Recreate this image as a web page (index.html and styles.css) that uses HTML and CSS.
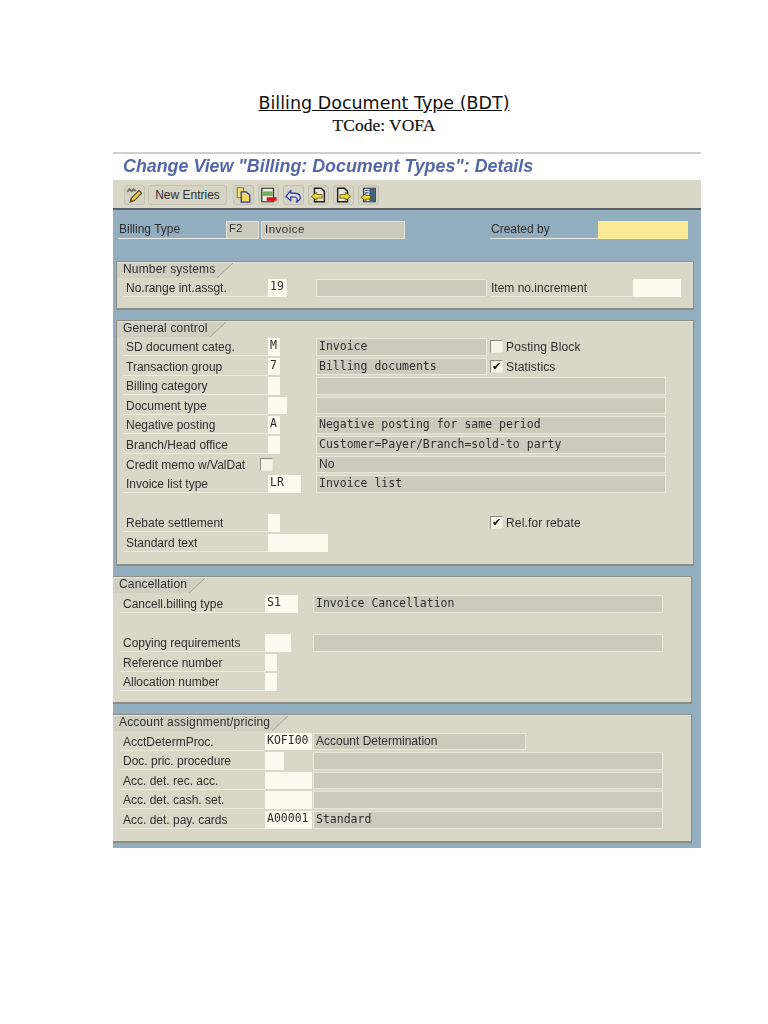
FILE: index.html
```html
<!DOCTYPE html>
<html lang="en">
<head>
<meta charset="utf-8">
<title>Billing Document Type (BDT)</title>
<link rel="stylesheet" href="styles.css">
</head>
<body>
<header class="heading">
  <h1 class="doc-title">Billing Document Type (BDT)</h1>
  <p class="doc-sub">TCode: VOFA</p>
</header>
<main class="screen">
  <h2 class="view-title">Change View "Billing: Document Types": Details</h2>
  <div class="toolbar">
    <button class="btn btn-icon" type="button"><svg viewBox="0 0 20 20" class="ico"><path d="M2 6.500 4.500 3.500 7 6 9 3.500 11.500 6" fill="none" stroke="#6e6e66" stroke-width="2"/><path d="M6.500 13.500 15 5 18 8 9.500 16.500 5 18Z" fill="#f2c94a" stroke="#4e4526" stroke-width="1.200"/><path d="M5 18 6.200 14.500 9 16.800Z" fill="#7a5a30"/></svg></button>
    <button class="btn btn-text" type="button">New Entries</button>
    <button class="btn btn-icon btn-copy" type="button"><svg viewBox="0 0 20 20" class="ico"><path d="M3 2H10V13H3Z" fill="#f4dc7a" stroke="#8a7a30" stroke-width="1.200"/><path d="M7.500 6.500H13L17 10V18H7.500Z" fill="#f3d95f" stroke="#2f35a0" stroke-width="1.400"/></svg></button>
    <button class="btn btn-icon" type="button"><svg viewBox="0 0 20 20" class="ico"><path d="M2.500 2.500H15.500V17.500H2.500Z" fill="#ecece0" stroke="#2c2c2c" stroke-width="1.300"/><path d="M3.500 6H14.500V11H3.500Z" fill="#6fae5a"/><path d="M8 12.500H19V16.500H8Z" fill="#d8121c"/></svg></button>
    <button class="btn btn-icon" type="button"><svg viewBox="0 0 20 20" class="ico"><path d="M1.500 11.500 7 5V8H11.500C16.500 8 18.500 11 17 15L13.500 18C15 14.500 14 12 10.500 12H7V16.500Z" fill="#dfe3f5" stroke="#3344a0" stroke-width="1.500" stroke-linejoin="round"/></svg></button>
    <button class="btn btn-icon" type="button"><svg viewBox="0 0 20 20" class="ico"><path d="M5.500 2.500H13L16.500 6V17.500H5.500Z" fill="#e8e8dc" stroke="#1c1c1c" stroke-width="1.600"/><path d="M2 11.500 8 7V9.500H14V13.500H8V16Z" fill="#f2d92e" stroke="#4c4208" stroke-width=".8"/></svg></button>
    <button class="btn btn-icon" type="button"><svg viewBox="0 0 20 20" class="ico"><path d="M3.500 2.500H11L14.500 6V17.500H3.500Z" fill="#e8e8dc" stroke="#1c1c1c" stroke-width="1.600"/><path d="M18 11.500 12 7V9.500H6V13.500H12V16Z" fill="#f2d92e" stroke="#4c4208" stroke-width=".8"/></svg></button>
    <button class="btn btn-icon" type="button"><svg viewBox="0 0 20 20" class="ico"><path d="M4.500 2.500H17.500V17.500H4.500Z" fill="#dfe2e4" stroke="#2c2c2c" stroke-width="1.300"/><path d="M11 3H17V17H11Z" fill="#3f607e"/><path d="M6 5H10M6 7.500H10" stroke="#3344a0" stroke-width="1.200"/><path d="M1.500 12.500 7 8.500V10.500H12V14.500H7V16.500Z" fill="#f2d92e" stroke="#4c4208" stroke-width=".8"/></svg></button>
  </div>
  <div class="canvas">
    <div class="head-row">
      <span class="head-label">Billing Type</span>
      <span class="head-code">F2</span>
      <span class="head-name">Invoice</span>
      <span class="head-label head-created">Created by</span>
      <span class="head-req"></span>
    </div>

    <section class="group group-first">
      <div class="tab"><span class="tab-text">Number systems</span><svg class="tab-cut" viewBox="0 0 16 17" preserveAspectRatio="none"><path d="M0 0H16L0 17Z" fill="#d0d0c2"/><path d="M16 0 0 17" stroke="#9a9c90" fill="none"/></svg></div>
      <div class="rows">
        <div class="row"><span class="lbl">No.range int.assgt.</span><span class="val"><span class="inp w-2">19</span></span><span class="cell"><span class="out out-s"></span><span class="lbl lbl-item">Item no.increment</span><span class="inp w-item"></span></span></div>
      </div>
    </section>

    <section class="group">
      <div class="tab"><span class="tab-text">General control</span><svg class="tab-cut" viewBox="0 0 16 17" preserveAspectRatio="none"><path d="M0 0H16L0 17Z" fill="#d0d0c2"/><path d="M16 0 0 17" stroke="#9a9c90" fill="none"/></svg></div>
      <div class="rows">
        <div class="row"><span class="lbl">SD document categ.</span><span class="val"><span class="inp w-1">M</span></span><span class="cell"><span class="out out-s mono">Invoice</span><span class="chk"></span><span class="chk-text">Posting Block</span></span></div>
        <div class="row"><span class="lbl">Transaction group</span><span class="val"><span class="inp w-1">7</span></span><span class="cell"><span class="out out-s mono">Billing documents</span><span class="chk chk-on">✔</span><span class="chk-text">Statistics</span></span></div>
        <div class="row"><span class="lbl">Billing category</span><span class="val"><span class="inp w-1"></span></span><span class="cell"><span class="out out-l"></span></span></div>
        <div class="row"><span class="lbl">Document type</span><span class="val"><span class="inp w-2"></span></span><span class="cell"><span class="out out-l"></span></span></div>
        <div class="row"><span class="lbl">Negative posting</span><span class="val"><span class="inp w-1">A</span></span><span class="cell"><span class="out out-l mono">Negative posting for same period</span></span></div>
        <div class="row"><span class="lbl">Branch/Head office</span><span class="val"><span class="inp w-1"></span></span><span class="cell"><span class="out out-l mono">Customer=Payer/Branch=sold-to party</span></span></div>
        <div class="row row-memo"><span class="lbl lbl-plain">Credit memo w/ValDat</span><span class="val"><span class="chk chk-memo"></span></span><span class="cell"><span class="out out-l">No</span></span></div>
        <div class="row"><span class="lbl">Invoice list type</span><span class="val"><span class="inp w-3">LR</span></span><span class="cell"><span class="out out-l mono">Invoice list</span></span></div>
        <div class="row"></div>
        <div class="row"><span class="lbl">Rebate settlement</span><span class="val"><span class="inp w-1"></span></span><span class="cell cell-far"><span class="chk chk-on">✔</span><span class="chk-text">Rel.for rebate</span></span></div>
        <div class="row"><span class="lbl">Standard text</span><span class="val"><span class="inp w-5"></span></span></div>
      </div>
    </section>

    <section class="group group-flush">
      <div class="tab"><span class="tab-text">Cancellation</span><svg class="tab-cut" viewBox="0 0 16 17" preserveAspectRatio="none"><path d="M0 0H16L0 17Z" fill="#d0d0c2"/><path d="M16 0 0 17" stroke="#9a9c90" fill="none"/></svg></div>
      <div class="rows">
        <div class="row"><span class="lbl">Cancell.billing type</span><span class="val"><span class="inp w-3">S1</span></span><span class="cell"><span class="out out-l mono">Invoice Cancellation</span></span></div>
        <div class="row"></div>
        <div class="row"><span class="lbl">Copying requirements</span><span class="val"><span class="inp w-2b"></span></span><span class="cell"><span class="out out-l"></span></span></div>
        <div class="row"><span class="lbl">Reference number</span><span class="val"><span class="inp w-1"></span></span></div>
        <div class="row"><span class="lbl">Allocation number</span><span class="val"><span class="inp w-1"></span></span></div>
      </div>
    </section>

    <section class="group group-flush group-last">
      <div class="tab"><span class="tab-text">Account assignment/pricing</span><svg class="tab-cut" viewBox="0 0 16 17" preserveAspectRatio="none"><path d="M0 0H16L0 17Z" fill="#d0d0c2"/><path d="M16 0 0 17" stroke="#9a9c90" fill="none"/></svg></div>
      <div class="rows">
        <div class="row"><span class="lbl">AcctDetermProc.</span><span class="val"><span class="inp w-6">KOFI00</span></span><span class="cell"><span class="out out-m">Account Determination</span></span></div>
        <div class="row"><span class="lbl">Doc. pric. procedure</span><span class="val"><span class="inp w-2"></span></span><span class="cell"><span class="out out-l"></span></span></div>
        <div class="row"><span class="lbl">Acc. det. rec. acc.</span><span class="val"><span class="inp w-6"></span></span><span class="cell"><span class="out out-l"></span></span></div>
        <div class="row"><span class="lbl">Acc. det. cash. set.</span><span class="val"><span class="inp w-6"></span></span><span class="cell"><span class="out out-l"></span></span></div>
        <div class="row"><span class="lbl">Acc. det. pay. cards</span><span class="val"><span class="inp w-6">A00001</span></span><span class="cell"><span class="out out-l mono">Standard</span></span></div>
      </div>
    </section>
  </div>
</main>
</body>
</html>
```
FILE: styles.css
```css
* { box-sizing: border-box; }
html, body { margin: 0; background: #fff; }
body { height: 1024px; overflow: hidden; }

.heading { padding-top: 92px; height: 152px; text-align: center; color: #111; }
.doc-title { margin: 0; font: 400 17.5px/22px "DejaVu Sans", sans-serif; text-decoration: underline; }
.doc-sub { margin: 0; font: 400 17.5px/22px "Liberation Serif", serif; -webkit-text-stroke: .2px #111; }

.screen { width: 588px; margin-left: 113px; border-top: 2px solid #cfcfcf; filter: blur(.35px); font: 12px/16px "Liberation Sans", sans-serif; color: #2e2e2e; }
.view-title { margin: 0; height: 26px; padding-left: 10px; font: italic 700 17.85px/25px "Liberation Sans", sans-serif; color: #5468a6; }

.toolbar { height: 30px; background: #d9d8c8; border-bottom: 2px solid #5c6066; display: flex; align-items: flex-start; padding: 5px 0 0 11px; gap: 4px; }
.btn { height: 20px; padding: 0; border: 1px solid #c4c3b3; border-radius: 3px; background: #d5d4c5; font: 12px/16px "Liberation Sans", sans-serif; color: #2e2e2e; display: flex; align-items: center; justify-content: center; }
.btn-icon { width: 21px; }
.btn-text { width: 79px; margin-left: -1px; }
.btn-copy { margin-left: 2px; }
.ico { width: 19px; height: 18px; display: block; }

.canvas { background: #93aebf; padding: 11px 0 5px; display: flex; flex-direction: column; gap: 10px; }

.head-row { display: flex; height: 18px; margin-left: 5px; margin-bottom: 12px; }
.head-label { width: 108px; border-bottom: 1px solid #e9ecea; padding-left: 1px; }
.head-code { width: 33px; background: #cbcbbd; border: 1px solid #e4e4d8; padding-left: 2px; font-size: 11.5px; line-height: 13px; }
.head-name { width: 144px; margin-left: 2px; background: #cbcbbd; border: 1px solid #e4e4d8; padding-left: 3px; line-height: 14px; font-size: 11.5px; letter-spacing: .5px; }
.head-created { margin-left: 85px; padding-left: 1px; }
.head-req { width: 90px; background: #fbe998; }

.group { margin: 0 7px 0 3px; background: #d9d8c8; border: 1px solid #8b8e84; border-width: 1px 1px 2px 1px; padding-bottom: 12.8px; }
.group-first { padding-bottom: 11.4px; }
.group-flush { margin: 0 9px 0 0; border-left-width: 0; padding-bottom: 11px; }
.group-last { padding-bottom: 12px; }

.tab { display: flex; height: 16px; margin-bottom: 1px; border-top: 1px solid #e6e6da; }
.group-flush .tab { margin-bottom: 1.700px; }
.tab-text { background: #d0d0c2; padding-left: 6px; padding-right: 2px; line-height: 12px; color: #2e2e2e; white-space: nowrap; letter-spacing: .17px; }
.tab-cut { width: 16px; height: 100%; display: block; }

.rows { display: grid; grid-auto-rows: 17.6px; row-gap: 2px; padding-left: 6px; }
.group-flush .rows { padding-left: 7px; }
.row { display: grid; grid-template-columns: 145px 48px 1fr; }
.row-memo { grid-template-columns: 137px 56px 1fr; }

.lbl { border-bottom: 1px solid #ecebdf; padding: 1px 0 0 3px; white-space: nowrap; line-height: 16px; }
.lbl-plain { border-bottom: 0; }
.val { display: flex; }
.cell { display: flex; align-items: flex-start; }
.cell-far { padding-left: 171px; }

.inp { display: block; flex: none; height: 17.6px; background: #fbfbef; padding-left: 2px; font: 11.500px/15px "DejaVu Sans Mono", monospace; color: #2e2e2e; }
.w-1 { width: 12px; }
.w-2 { width: 19px; }
.w-2b { width: 26px; }
.w-3 { width: 33px; }
.w-5 { width: 60px; }
.w-6 { width: 47px; }
.w-item { width: 48px; }

.out { display: block; height: 17.6px; background: #cbcbbd; border: 1px solid #e8e8dc; padding-left: 2px; line-height: 15px; white-space: nowrap; overflow: hidden; }
.out-s { width: 171px; }
.out-m { width: 213px; }
.out-l { width: 350px; }
.mono { font: 11.500px/15px "DejaVu Sans Mono", monospace; }

.lbl-item { width: 143px; margin-left: 3px; padding-left: 1px; height: 17.6px; }
.chk { display: block; width: 13px; height: 13px; margin: 2px 0 0 3px; background: #f3f3e6; border: 1px solid #8a8c80; border-right-color: #e8e8dc; border-bottom-color: #e8e8dc; font: 11px/11px "DejaVu Sans", sans-serif; color: #111; text-align: center; }
.chk-memo { margin: 2px 0 0 0; }
.chk-text { margin-left: 3px; letter-spacing: .15px; padding-top: 1px; }
```
